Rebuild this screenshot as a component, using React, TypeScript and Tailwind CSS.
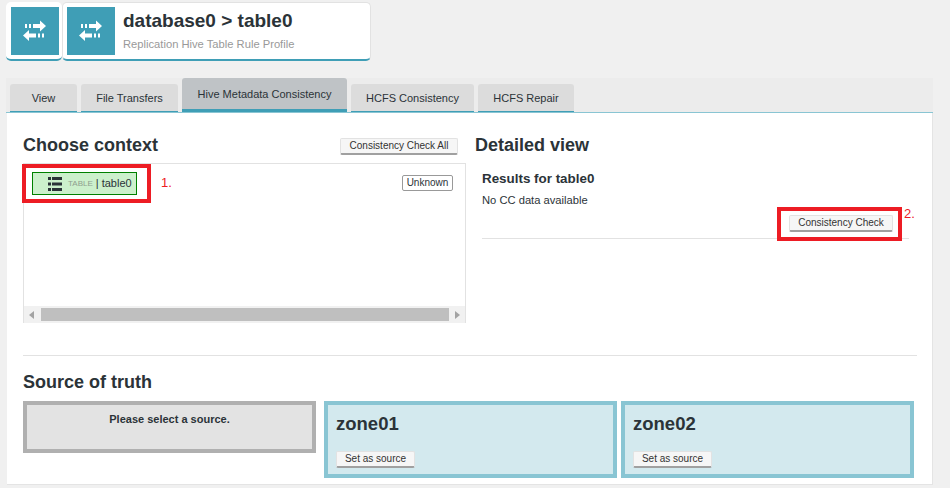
function TransferIcon() {
  return (
    <div className="w-12 h-12 bg-[#3f9eb6] shrink-0">
      <svg width="48" height="48" viewBox="0 0 48 48" fill="white">
        <path d="M14 17h2v4h-2z M18 17h2v4h-2z" />
        <path d="M22 17h7v-3.500l6 5.500-6 5.500V21h-7z" />
        <path d="M27 26.500h2v4h-2z M31 26.500h2v4h-2z" />
        <path d="M25 26.500h-7V23l-6 5.500 6 5.500v-3.500h7z" />
      </svg>
    </div>
  );
}

function TableListIcon() {
  return (
    <svg width="14" height="14" viewBox="0 0 14 14" fill="#2b3338" className="shrink-0">
      <path d="M0 0h3v3H0z M4 0h10v3H4z M0 5.500h3v3H0z M4 5.500h10v3H4z M0 11h3v3H0z M4 11h10v3H4z" />
    </svg>
  );
}

function Btn({ label, className }: { label: string; className: string }) {
  return (
    <button className={"h-[17px] bg-[#f6f6f6] rounded-[2px] border border-[#e2e2e2] border-b-2 border-b-[#a0a0a0] text-[10px] leading-[14px] text-[#333] flex items-center justify-center " + className}>
      {label}
    </button>
  );
}

const tabs = [
  { label: "View", w: "w-[67px]" },
  { label: "File Transfers", w: "w-[97px]" },
  { label: "Hive Metadata Consistency", w: "w-[165px]", active: true },
  { label: "HCFS Consistency", w: "w-[123px]" },
  { label: "HCFS Repair", w: "w-[96px]" },
];

function ZoneCard({ name }: { name: string }) {
  return (
    <div className="w-[293px] h-[77px] border-[4px] border-[#89c5d3] bg-[#d3e9ee] pl-[8px] pt-[7px]">
      <div className="text-[18.500px] leading-[24px] font-bold text-[#2b3338]">{name}</div>
      <Btn label="Set as source" className="w-[79px] mt-[15px]" />
    </div>
  );
}

export default function App() {
  return (
    <div className="w-[950px] h-[488px] overflow-hidden bg-[#f0f0f0] text-[#2b3338] font-['Liberation_Sans',Arial,sans-serif]">
      {/* Header cards */}
      <div className="flex pl-[6px] pt-[2px] h-[78px]">
        <div className="w-[56px] h-[59px] bg-white rounded-[5px] border-b-2 border-[#3f9eb6] pl-[5px] pt-[5px]">
          <TransferIcon />
        </div>
        <div className="w-[309px] h-[59px] bg-white rounded-[5px] border border-[#e2e2e2] border-b-2 border-b-[#3f9eb6] pl-[4px] pt-[4px] flex gap-2">
          <TransferIcon />
          <div>
            <div className="text-[19px] leading-[22px] font-bold mt-[3px] text-[#2b3338]">database0 &gt; table0</div>
            <div className="text-[11.200px] leading-[14px] text-[#999] mt-[5px]">Replication Hive Table Rule Profile</div>
          </div>
        </div>
      </div>

      {/* Tabs + content panel */}
      <div className="ml-[6px] w-[927px] h-[407px] relative">
        <div className="h-[35px] bg-[#ececec] border-b border-[#89c5d3] flex items-end gap-[4px] pl-[4px]">
          {tabs.map((t) => (
            <div
              key={t.label}
              className={
                t.active
                  ? t.w + " h-[34px] bg-[#bfc3c6] rounded-t-[3px] border-b-[3px] border-[#3f9eb6] text-[11px] text-[#2b3338] text-center pt-[9px] leading-[14px]"
                  : t.w + " h-[28px] bg-[#dcdcdc] rounded-t-[3px] border-b border-[#3f9eb6] text-[11px] text-[#2b3338] text-center pt-[7px] leading-[14px]"
              }
            >
              {t.label}
            </div>
          ))}
        </div>

        <div className="ml-[1px] h-[372px] bg-white border-b border-r border-[#e4e4e4] pl-[16px] relative">
          <div className="flex h-[242px]">
            {/* Choose context */}
            <div className="w-[443px] shrink-0">
              <div className="flex justify-between items-start h-[50px] pt-[21px] pr-[8px]">
                <h2 className="text-[18px] leading-[22px] font-bold">Choose context</h2>
                <Btn label="Consistency Check All" className="w-[118px] mt-[4px]" />
              </div>
              <div className="h-[160px] border border-[#e2e2e2] border-b-0 flex flex-col justify-between">
                <div className="flex justify-between pl-[8px] pr-[12px] pt-[8px]">
                  <div className="w-[105px] h-[23px] border border-[#008000] bg-[#ccf0cc] flex items-center pl-[15px]">
                    <TableListIcon />
                    <span className="text-[8px] text-[#8f9f8f] ml-[6px]">TABLE</span>
                    <span className="text-[11px] ml-[3px]">| table0</span>
                  </div>
                  <div className="w-[51px] h-[16px] mt-[3px] border border-[#999] rounded-[2px] text-[10px] leading-[14px] text-center">Unknown</div>
                </div>
                <div className="h-[17px] bg-[#f1f1f1] flex items-center justify-between pl-[5px] pr-[5px]">
                  <span className="w-0 h-0 border-y-[4px] border-y-transparent border-r-[5px] border-r-[#a3a3a3]" />
                  <div className="w-[408px] h-[13px] bg-[#bfbfbf]" />
                  <span className="w-0 h-0 border-y-[4px] border-y-transparent border-l-[5px] border-l-[#a3a3a3]" />
                </div>
              </div>
            </div>

            {/* Detailed view */}
            <div className="ml-[9px] flex-1">
              <h2 className="text-[18px] leading-[22px] font-bold mt-[21px]">Detailed view</h2>
              <div className="ml-[7px] w-[427px] mt-[15px] h-[68px] border-b border-[#e2e2e2]">
                <div className="text-[13.400px] leading-[16px] font-bold">Results for table0</div>
                <div className="text-[11.200px] leading-[14px] mt-[6px]">No CC data available</div>
                <Btn label="Consistency Check" className="w-[104px] mt-[8px] ml-[307px]" />
              </div>
            </div>
          </div>

          <div className="w-[894px] h-px bg-[#e2e2e2]" />

          <h2 className="text-[18px] leading-[22px] font-bold mt-[15px]">Source of truth</h2>
          <div className="flex gap-[4px] mt-[8px] items-start">
            <div className="w-[293px] h-[52px] border-[4px] border-[#b0b0b0] bg-[#e3e3e3] text-center text-[11px] leading-[14px] font-bold pt-[7px] mr-[4px]">
              Please select a source.
            </div>
            <ZoneCard name="zone01" />
            <ZoneCard name="zone02" />
          </div>

          {/* Annotations */}
          <div className="absolute left-[15px] top-[51px] w-[129px] h-[39px] border-[4px] border-[#ed1c24]" />
          <div className="absolute left-[154px] top-[62px] text-[13px] leading-[16px] text-[#ed1c24]">1.</div>
          <div className="absolute left-[770px] top-[94px] w-[125px] h-[34px] border-[4px] border-[#ed1c24]" />
          <div className="absolute left-[897px] top-[93px] text-[13px] leading-[16px] text-[#ed1c24]">2.</div>
        </div>
      </div>
    </div>
  );
}
